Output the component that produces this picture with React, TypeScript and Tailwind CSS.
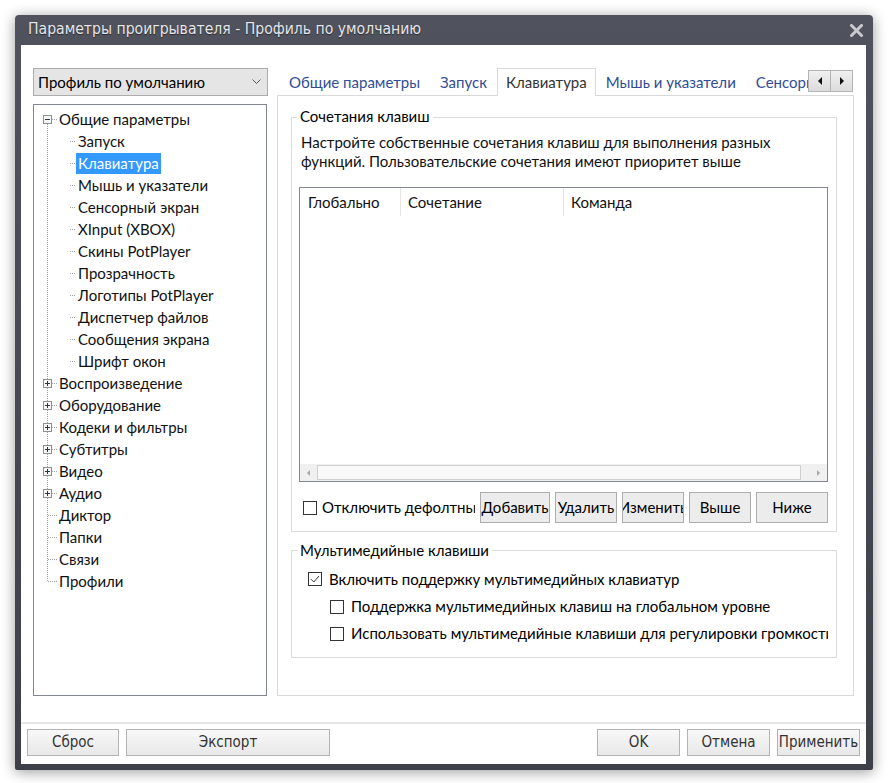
type TreeItem = {
  label: string;
  level: 0 | 1;
  box?: "minus" | "plus";
  selected?: boolean;
};

const treeItems: TreeItem[] = [
  { label: "Общие параметры", level: 0, box: "minus" },
  { label: "Запуск", level: 1 },
  { label: "Клавиатура", level: 1, selected: true },
  { label: "Мышь и указатели", level: 1 },
  { label: "Сенсорный экран", level: 1 },
  { label: "XInput (XBOX)", level: 1 },
  { label: "Скины PotPlayer", level: 1 },
  { label: "Прозрачность", level: 1 },
  { label: "Логотипы PotPlayer", level: 1 },
  { label: "Диспетчер файлов", level: 1 },
  { label: "Сообщения экрана", level: 1 },
  { label: "Шрифт окон", level: 1 },
  { label: "Воспроизведение", level: 0, box: "plus" },
  { label: "Оборудование", level: 0, box: "plus" },
  { label: "Кодеки и фильтры", level: 0, box: "plus" },
  { label: "Субтитры", level: 0, box: "plus" },
  { label: "Видео", level: 0, box: "plus" },
  { label: "Аудио", level: 0, box: "plus" },
  { label: "Диктор", level: 0 },
  { label: "Папки", level: 0 },
  { label: "Связи", level: 0 },
  { label: "Профили", level: 0 },
];

const tabs = ["Общие параметры", "Запуск", "Клавиатура", "Мышь и указатели", "Сенсорный экран", "XInput (XBOX)"];

const dot = { stroke: "#a0a0a0", strokeWidth: 1, strokeDasharray: "1 1" };

function Gutter({ item, first, last }: { item: TreeItem; first: boolean; last: boolean }) {
  if (item.level === 1) {
    return (
      <svg width="42" height="22" className="shrink-0">
        <line x1="13.5" y1="0" x2="13.5" y2="22" {...dot} />
        <line x1="36" y1="11.5" x2="42" y2="11.5" {...dot} />
      </svg>
    );
  }
  return (
    <svg width="23" height="22" className="shrink-0">
      {item.box ? (
        <>
          {!first && <line x1="13.5" y1="0" x2="13.5" y2="7" {...dot} />}
          {!last && <line x1="13.5" y1="16" x2="13.5" y2="22" {...dot} />}
          <line x1="18" y1="11.5" x2="23" y2="11.5" {...dot} />
          <rect x="9.5" y="7.5" width="8" height="8" fill="#f7f7f7" stroke="#8f8f8f" />
          <line x1="11" y1="11.5" x2="16" y2="11.5" stroke="#2d3548" />
          {item.box === "plus" && <line x1="13.5" y1="9" x2="13.5" y2="14" stroke="#2d3548" />}
        </>
      ) : (
        <>
          <line x1="13.5" y1="0" x2="13.5" y2={last ? 12 : 22} {...dot} />
          <line x1="14" y1="11.5" x2="23" y2="11.5" {...dot} />
        </>
      )}
    </svg>
  );
}

function CheckBox({ checked }: { checked?: boolean }) {
  return (
    <span className="w-[14px] h-[14px] border border-[#333] bg-white shrink-0 flex items-center justify-center">
      {checked && (
        <svg width="12" height="12" viewBox="0 0 12 12">
          <path d="M2 6.2 L4.8 9 L10 3" fill="none" stroke="#333" strokeWidth="1" />
        </svg>
      )}
    </span>
  );
}

function Tri({ dir, color, size = 4 }: { dir: "left" | "right"; color: string; size?: number }) {
  const h = size * 2;
  return (
    <svg width={size} height={h} viewBox={`0 0 ${size} ${h}`}>
      <path d={dir === "left" ? `M${size} 0 L0 ${size} L${size} ${h} Z` : `M0 0 L${size} ${size} L0 ${h} Z`} fill={color} />
    </svg>
  );
}

function Btn({ label, w }: { label: string; w: string }) {
  return (
    <div className={`${w} h-[31px] shrink-0 overflow-hidden whitespace-nowrap flex items-center justify-center border border-[#adadad] bg-[#ececec] text-black`}>
      {label}
    </div>
  );
}

function FooterBtn({ label, w }: { label: string; w: string }) {
  return (
    <div className={`${w} h-[27px] shrink-0 overflow-hidden whitespace-nowrap flex items-center justify-center border border-[#b3b3b3] bg-gradient-to-b from-[#f8f8f8] to-[#e8e8e8] text-[#333] font-['DejaVu_Sans_Condensed',sans-serif] text-[15px]`}>
      {label}
    </div>
  );
}

export default function App() {
  return (
    <div className="w-[888px] h-[783px] bg-white pl-[15px] pt-[15px] font-['Lato',sans-serif] text-[15px] text-black">
      <div className="w-[858px] h-[755px] flex flex-col bg-gradient-to-b from-[#50525d] to-[#3d3f49] rounded-t-[4px] rounded-b-[2px] shadow-[0_2px_14px_rgba(0,0,0,0.4)]">
        {/* title bar */}
        <div className="h-[30px] shrink-0 flex items-center pl-[13px] pr-[10px]">
          <span className="font-['DejaVu_Sans_Condensed',sans-serif] text-[15.6px] text-[#e6e6ea] [text-shadow:0_1px_1px_rgba(0,0,0,0.5)]">
            Параметры проигрывателя - Профиль по умолчанию
          </span>
          <svg width="13" height="13" viewBox="0 0 13 13" className="ml-auto mt-[1px]">
            <path d="M1.5 1.5 L11.5 11.5 M11.5 1.5 L1.5 11.5" stroke="#c9c9cf" strokeWidth="3" strokeLinecap="square" />
          </svg>
        </div>

        {/* client area */}
        <div className="flex-1 flex flex-col bg-white ml-[6px] mr-[7px] mb-[6px]">
          <div className="flex pl-[12px] pt-[23px] gap-[9px]">
            {/* left column */}
            <div className="w-[235px] flex flex-col gap-[8px]">
              <div className="h-[28px] flex items-center pl-[4px] pr-[6px] bg-[#e5e5e5] border border-[#acacac]">
                <span>Профиль по умолчанию</span>
                <svg width="9" height="6" viewBox="0 0 9 6" className="ml-auto">
                  <path d="M0.5 0.5 L4.5 4.5 L8.5 0.5" fill="none" stroke="#555" strokeWidth="1" />
                </svg>
              </div>
              <div className="w-[234px] h-[592px] border border-[#828790] pt-[3px]">
                {treeItems.map((it, i) => (
                  <div key={it.label} className="h-[22px] flex items-center">
                    <Gutter item={it} first={i === 0} last={i === treeItems.length - 1} />
                    <span
                      className={`h-[21px] flex items-center px-[2px] whitespace-nowrap ${
                        it.selected ? "bg-[#3399ff] text-white" : "text-[#111]"
                      }`}
                    >
                      {it.label}
                    </span>
                  </div>
                ))}
              </div>
            </div>

            {/* right column */}
            <div className="w-[577px] flex flex-col">
              <div className="h-[28px] -mb-px relative z-10 flex">
                <div className="ml-[2px] w-[529px] overflow-hidden flex">
                  {tabs.map((t) => (
                    <div
                      key={t}
                      className={`h-[28px] shrink-0 whitespace-nowrap flex items-center ${
                        t === "Клавиатура"
                          ? "bg-white border border-b-0 border-[#d9d9d9] px-[8px] text-[#333]"
                          : "px-[10px] text-[#2f4d97]"
                      }`}
                    >
                      {t}
                    </div>
                  ))}
                </div>
                <div className="mt-[2px] flex h-[22px]">
                  <div className="w-[23px] h-[22px] border border-[#b3b3b3] bg-gradient-to-b from-[#f0f0f0] to-[#dcdcdc] flex items-center justify-center">
                    <Tri dir="left" color="#111" />
                  </div>
                  <div className="w-[23px] h-[22px] -ml-px border border-[#b3b3b3] bg-gradient-to-b from-[#f0f0f0] to-[#dcdcdc] flex items-center justify-center">
                    <Tri dir="right" color="#111" />
                  </div>
                </div>
              </div>

              <div className="h-[601px] border border-[#d9d9d9] pl-[13px] pt-[21px]">
                {/* group 1 */}
                <div className="relative w-[546px] h-[415px] border border-[#dcdcdc]">
                  <span className="absolute left-[5px] -top-[11px] px-[3px] bg-white leading-[19px]">Сочетания клавиш</span>
                  <div className="pl-[9px] pt-[15px] leading-[19px] text-[#111]">
                    Настройте собственные сочетания клавиш для выполнения разных
                    <br />
                    функций. Пользовательские сочетания имеют приоритет выше
                  </div>
                  <div className="ml-[7px] mt-[16px] w-[529px] h-[295px] border border-[#828790] flex flex-col">
                    <div className="h-[28px] flex text-[#111]">
                      <div className="w-[101px] border-r border-[#e5e5e5] pl-[8px] flex items-center">Глобально</div>
                      <div className="w-[163px] border-r border-[#e5e5e5] pl-[7px] flex items-center">Сочетание</div>
                      <div className="flex-1 pl-[7px] flex items-center">Команда</div>
                    </div>
                    <div className="flex-1" />
                    <div className="h-[17px] flex bg-[#f0f0f0]">
                      <div className="w-[17px] flex items-center justify-center">
                        <Tri dir="left" color="#a6a6a6" size={3} />
                      </div>
                      <div className="w-[484px] my-[1px] bg-[#f9f9f9] border border-[#cfcfcf]" />
                      <div className="flex-1" />
                      <div className="w-[17px] flex items-center justify-center">
                        <Tri dir="right" color="#a6a6a6" size={3} />
                      </div>
                    </div>
                  </div>
                  <div className="mt-[10px] flex items-center pl-[11px] pr-[8px]">
                    <CheckBox />
                    <span className="ml-[5px] w-[156px] overflow-hidden whitespace-nowrap">Отключить дефолтные</span>
                    <div className="ml-[5px] flex gap-[5px]">
                      <Btn label="Добавить" w="w-[70px]" />
                      <Btn label="Удалить" w="w-[62px]" />
                      <Btn label="Изменить" w="w-[62px]" />
                      <Btn label="Выше" w="w-[62px]" />
                      <Btn label="Ниже" w="w-[72px]" />
                    </div>
                  </div>
                </div>

                {/* group 2 */}
                <div className="relative mt-[18px] w-[546px] h-[108px] border border-[#dcdcdc]">
                  <span className="absolute left-[5px] -top-[10px] px-[3px] bg-white leading-[19px]">Мультимедийные клавиши</span>
                  <div className="pt-[14px] pl-[16px] flex flex-col">
                    <div className="h-[28px] flex items-center gap-[7px]">
                      <CheckBox checked />
                      <span>Включить поддержку мультимедийных клавиатур</span>
                    </div>
                    <div className="h-[27px] ml-[22px] flex items-center gap-[7px]">
                      <CheckBox />
                      <span>Поддержка мультимедийных клавиш на глобальном уровне</span>
                    </div>
                    <div className="h-[27px] ml-[22px] w-[498px] overflow-hidden flex items-center gap-[7px] whitespace-nowrap">
                      <CheckBox />
                      <span>Использовать мультимедийные клавиши для регулировки громкости</span>
                    </div>
                  </div>
                </div>
              </div>
            </div>
          </div>

          <div className="mt-[26px] h-[2px] bg-[#e6e6e6]" />

          <div className="flex px-[6px] pt-[5px]">
            <div className="flex gap-[7px]">
              <FooterBtn label="Сброс" w="w-[92px]" />
              <FooterBtn label="Экспорт" w="w-[204px]" />
            </div>
            <div className="ml-auto flex gap-[7px]">
              <FooterBtn label="OK" w="w-[83px]" />
              <FooterBtn label="Отмена" w="w-[83px]" />
              <FooterBtn label="Применить" w="w-[83px]" />
            </div>
          </div>
        </div>
      </div>
    </div>
  );
}
